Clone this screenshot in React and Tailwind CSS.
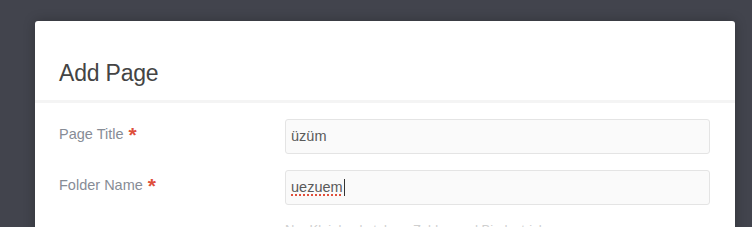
import React from 'react';

function Field({ label, children }) {
    return (
        <div className="flex items-start">
            <div className="w-[226px] pt-[5px] text-[14.5px] leading-[20px] text-[#878c96]">
                {label}
                <span className="ml-[5px] align-top text-[21px] font-bold leading-[22px] text-[#de4f3c]">*</span>
            </div>
            <div className="flex-1">{children}</div>
        </div>
    );
}

export default function App() {
    return (
        <div className="h-[227px] w-[752px] overflow-hidden bg-[#42444d] pt-[21px] pl-[35px]" style={{ fontFamily: '"Liberation Sans", Arial, sans-serif' }}>
            <div className="h-[260px] w-[700px] rounded-t-[3px] bg-white shadow-[0_0_12px_rgba(0,0,0,0.25)]">
                <div className="h-[82px] border-b-[3px] border-[#f4f4f4] px-6 pt-[38px]">
                    <h1 className="text-[23px] leading-[28px] text-[#444] tracking-[-0.2px]">Add Page</h1>
                </div>
                <div className="flex flex-col gap-4 pl-6 pr-[25px] pt-[16px]">
                    <Field label="Page Title">
                        <div className="flex h-[35px] items-center rounded-[3px] border border-[#e4e4e4] bg-[#fafafa] px-[5px] text-[14.5px] text-[#5a5a5a]">
                            üzüm
                        </div>
                    </Field>
                    <Field label="Folder Name">
                        <div className="flex h-[35px] items-center rounded-[3px] border border-[#e4e4e4] bg-[#fafafa] px-[5px] text-[14.5px] text-[#5a5a5a]">
                            <span className="underline decoration-dotted decoration-[#e0503c] decoration-2 underline-offset-[3px]">uezuem</span>
                            <span className="ml-[1px] inline-block h-[17px] w-[1px] bg-[#333]"></span>
                        </div>
                    </Field>
                    <div className="mt-0 pl-[226px] text-[13px] leading-[18px] text-[#cfcfcf]">
                        Nur Kleinbuchstaben, Zahlen und Bindestriche
                    </div>
                </div>
            </div>
        </div>
    );
}
